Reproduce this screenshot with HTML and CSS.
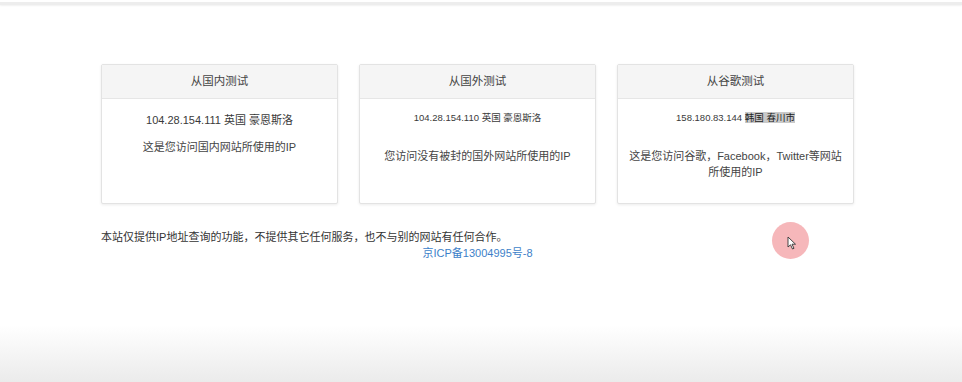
FILE: index.html
```html
<!DOCTYPE html>
<html>
<head>
    <title>IP地址查询</title>
    <link rel="stylesheet" href="styles.css">
</head>
<body>
    <div class="topbar"></div>
    <div class="container">
        <div class="cards">
            <div class="card">
                <div class="card-head">从国内测试</div>
                <div class="card-body">
                    <p class="ip">104.28.154.111 英国 豪恩斯洛</p>
                    <p class="desc near">这是您访问国内网站所使用的IP</p>
                </div>
            </div>
            <div class="card">
                <div class="card-head">从国外测试</div>
                <div class="card-body">
                    <p class="ip up">104.28.154.110 英国 豪恩斯洛</p>
                    <p class="desc">您访问没有被封的国外网站所使用的IP</p>
                </div>
            </div>
            <div class="card">
                <div class="card-head">从谷歌测试</div>
                <div class="card-body">
                    <p class="ip up">158.180.83.144 <span class="sel">韩国 春川市</span></p>
                    <p class="desc">这是您访问谷歌，Facebook，Twitter等网站所使用的IP</p>
                </div>
            </div>
        </div>
        <p class="note">本站仅提供IP地址查询的功能，不提供其它任何服务，也不与别的网站有任何合作。</p>
        <p class="icp"><a href="#">京ICP备13004995号-8</a></p>
    </div>

    <div class="cursor">
        <svg width="10" height="14" viewBox="0 0 10 14">
            <path d="M1 1 L1 11 L3.5 8.8 L5.5 13 L7 12.3 L5 8.2 L8.5 8.2 Z" fill="#fff" stroke="#333" stroke-width="0.9"/>
        </svg>
    </div>
</body>
</html>
```

FILE: styles.css
```css
html { height: 100%; background: linear-gradient(to bottom, #ffffff 325px, #ebebeb 382px); }
body { margin: 0; font-family: "Liberation Sans", "Noto Sans CJK SC", sans-serif; font-size: 11px; color: #3a3a3a; }
.topbar { height: 3px; margin-top: 2px; background: #ededed; box-shadow: 0 1px 2px rgba(0,0,0,0.06); }
.container { width: 753px; margin: 59px 0 0 101px; }
.cards { display: flex; gap: 21px; }
.card { width: 237px; height: 140px; box-sizing: border-box; background: #fff; border: 1px solid #e3e3e3; border-radius: 2px; box-shadow: 0 1px 3px rgba(0,0,0,0.08); }
.card-head { height: 33px; line-height: 32px; text-align: center; background: #f5f5f5; border-bottom: 1px solid #e6e6e6; color: #444; font-size: 11.5px; }
.card-body { padding: 13px 6px 0; text-align: center; }
.card-body p { margin: 0; line-height: 16px; }
.ip { color: #3a3a3a; }
.ip.up { margin-top: -2px; font-size: 9.5px; }
.desc { margin-top: 22px !important; color: #444; font-size: 11px; }
.desc.near { margin-top: 11px !important; }
.sel { background: #c9c9c9; color: #222; }
.note { margin: 25px 0 0; line-height: 16px; color: #333; }
.icp { margin: 0; text-align: center; line-height: 16px; }
.icp a { color: #3d7fc9; text-decoration: none; }
.cursor { position: absolute; left: 772px; top: 222px; width: 37px; height: 37px; border-radius: 50%; background: #f6b7ba; display: flex; align-items: center; justify-content: center; }
.cursor svg { margin: 4px 0 0 2px; }
```
